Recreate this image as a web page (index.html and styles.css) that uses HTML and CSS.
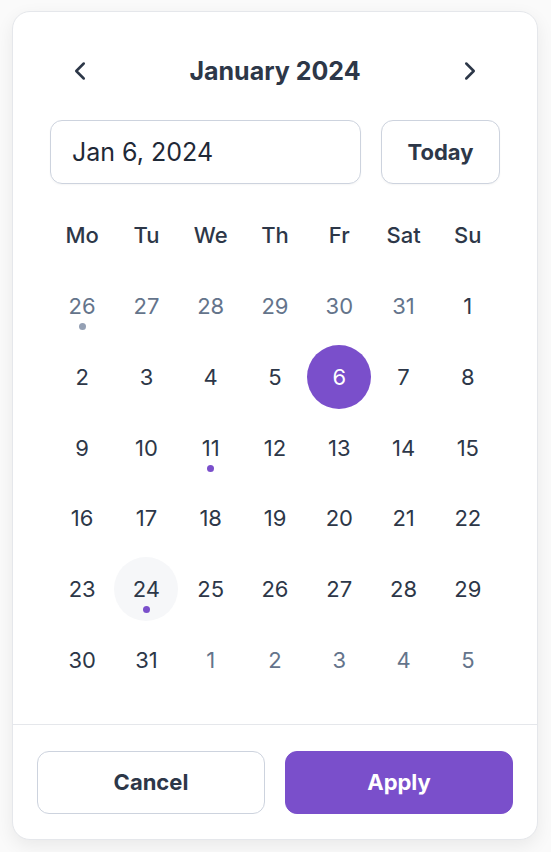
FILE: index.html
```html
<!DOCTYPE html>
<html>
<head>
<meta charset="utf-8">
<link rel="stylesheet" href="styles.css">
</head>
<body>
<div class="card">
  <div class="cal">
    <div class="head">
      <button class="nav" aria-label="Previous month">
        <svg viewBox="0 0 24 24" width="30" height="30"><path d="M15 18l-6-6 6-6" fill="none" stroke="currentColor" stroke-width="2" stroke-linecap="round" stroke-linejoin="round"/></svg>
      </button>
      <div class="title">January 2024</div>
      <button class="nav" aria-label="Next month">
        <svg viewBox="0 0 24 24" width="30" height="30"><path d="M9 18l6-6-6-6" fill="none" stroke="currentColor" stroke-width="2" stroke-linecap="round" stroke-linejoin="round"/></svg>
      </button>
    </div>
    <div class="inputs">
      <div class="date-input">Jan 6, 2024</div>
      <button class="today">Today</button>
    </div>
    <div class="weekdays">
      <span>Mo</span><span>Tu</span><span>We</span><span>Th</span><span>Fr</span><span>Sat</span><span>Su</span>
    </div>
    <div class="days">
      <span class="day out"><b>26</b><i class="dot gray"></i></span>
      <span class="day out"><b>27</b></span>
      <span class="day out"><b>28</b></span>
      <span class="day out"><b>29</b></span>
      <span class="day out"><b>30</b></span>
      <span class="day out"><b>31</b></span>
      <span class="day"><b>1</b></span>
      <span class="day"><b>2</b></span>
      <span class="day"><b>3</b></span>
      <span class="day"><b>4</b></span>
      <span class="day"><b>5</b></span>
      <span class="day selected"><b>6</b></span>
      <span class="day"><b>7</b></span>
      <span class="day"><b>8</b></span>
      <span class="day"><b>9</b></span>
      <span class="day"><b>10</b></span>
      <span class="day"><b>11</b><i class="dot"></i></span>
      <span class="day"><b>12</b></span>
      <span class="day"><b>13</b></span>
      <span class="day"><b>14</b></span>
      <span class="day"><b>15</b></span>
      <span class="day"><b>16</b></span>
      <span class="day"><b>17</b></span>
      <span class="day"><b>18</b></span>
      <span class="day"><b>19</b></span>
      <span class="day"><b>20</b></span>
      <span class="day"><b>21</b></span>
      <span class="day"><b>22</b></span>
      <span class="day"><b>23</b></span>
      <span class="day hover"><b>24</b><i class="dot"></i></span>
      <span class="day"><b>25</b></span>
      <span class="day"><b>26</b></span>
      <span class="day"><b>27</b></span>
      <span class="day"><b>28</b></span>
      <span class="day"><b>29</b></span>
      <span class="day"><b>30</b></span>
      <span class="day"><b>31</b></span>
      <span class="day out"><b>1</b></span>
      <span class="day out"><b>2</b></span>
      <span class="day out"><b>3</b></span>
      <span class="day out"><b>4</b></span>
      <span class="day out"><b>5</b></span>
    </div>
  </div>
  <div class="footer">
    <button class="btn cancel">Cancel</button>
    <button class="btn apply">Apply</button>
  </div>
</div>
</body>
</html>
```
FILE: styles.css
```css
* { box-sizing: border-box; }
html, body { margin: 0; padding: 0; }
body {
  background: #fafafa;
  font-family: Inter, "Noto Sans", "Liberation Sans", sans-serif;
  color: #2d3748;
  padding: 11px 13px 14px 12px;
}
button { font-family: inherit; cursor: pointer; }
.card {
  background: #fff;
  border: 1px solid #e5e7eb;
  border-radius: 18px;
  box-shadow: 0 6px 18px rgba(0,0,0,0.07);
  width: 526px;
}
.cal {
  padding: 39px 37px 32px 37px;
}
.head {
  display: flex;
  align-items: center;
  justify-content: space-between;
  height: 40px;
}
.nav {
  background: none;
  border: none;
  padding: 0;
  width: 60px;
  height: 40px;
  display: flex;
  align-items: center;
  justify-content: center;
  color: #2d3748;
}
.title {
  font-size: 25px;
  font-weight: 700;
  color: #2d3748;
}
.inputs {
  display: flex;
  gap: 20px;
  margin-top: 29px;
}
.date-input {
  flex: 1;
  height: 64px;
  border: 1.5px solid #cdd3de;
  border-radius: 12px;
  padding: 0 21px;
  display: flex;
  align-items: center;
  font-size: 25px;
  color: #1f2937;
  box-shadow: 0 1px 2px rgba(0,0,0,0.04);
}
.today {
  width: 119px;
  height: 64px;
  background: #fff;
  border: 1.5px solid #cdd3de;
  border-radius: 12px;
  font-size: 22px;
  font-weight: 700;
  color: #2d3748;
  box-shadow: 0 1px 2px rgba(0,0,0,0.04);
}
.weekdays {
  display: grid;
  grid-template-columns: repeat(7, 1fr);
  margin-top: 26px;
  height: 50px;
  align-items: center;
  text-align: center;
  font-size: 22px;
  font-weight: 500;
  color: #2d3748;
}
.days {
  display: grid;
  grid-template-columns: repeat(7, 1fr);
  row-gap: 6.8px;
  margin-top: 14px;
}
.day {
  position: relative;
  height: 64px;
  width: 64px;
  justify-self: center;
  border-radius: 50%;
  display: flex;
  align-items: center;
  justify-content: center;
  font-size: 22px;
  color: #2d3748;
}
.day b { font-weight: 400; }
.day.out { color: #64748b; }
.day.selected { background: #7a4fcb; color: #fff; }
.day.hover { background: #f6f7f9; }
.dot {
  position: absolute;
  left: 50%;
  bottom: 8px;
  width: 7px;
  height: 7px;
  margin-left: -3.5px;
  border-radius: 50%;
  background: #7a4fcb;
}
.dot.gray { background: #94a0b4; }
.footer {
  border-top: 1.5px solid #e5e7eb;
  display: flex;
  gap: 20px;
  padding: 26px 24px 25px 24px;
}
.btn {
  flex: 1;
  height: 63px;
  border-radius: 12px;
  font-size: 22px;
  font-weight: 700;
}
.cancel {
  background: #fff;
  border: 1.5px solid #cdd3de;
  color: #2d3748;
}
.apply {
  background: #7a4fcb;
  border: 1.5px solid #7a4fcb;
  color: #fff;
}
```
